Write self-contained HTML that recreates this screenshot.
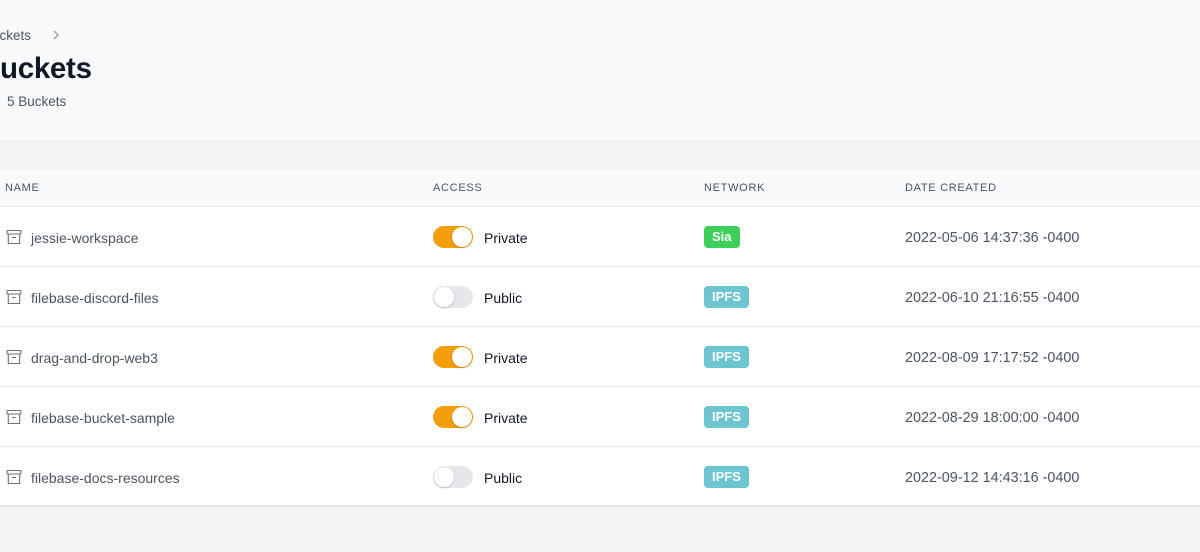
<!DOCTYPE html>
<html><head><meta charset="utf-8"><style>
*{margin:0;padding:0;box-sizing:border-box}
body{width:1200px;height:552px;overflow:hidden;background:#f3f4f6;font-family:"Liberation Sans",Arial,sans-serif;position:relative}
.top{position:absolute;left:0;top:0;width:1200px;height:140px;background:#f9fafb}
.crumb{position:absolute;left:-17px;top:28px;font-size:13.5px;color:#4b5563}
.chev{position:absolute;left:51px;top:29px}
h1{position:absolute;left:-21px;top:52px;font-size:29.5px;font-weight:bold;color:#111827;letter-spacing:-0.3px}
.sub{position:absolute;left:7px;top:94px;font-size:13.5px;color:#4b5563}
.table{position:absolute;left:0;top:170px;width:1200px;height:336px;background:#fff;border-bottom:1px solid #e5e7eb;box-shadow:0 1px 2px rgba(0,0,0,.05)}
.head{height:37px;background:#f9fafb;border-bottom:1px solid #e5e7eb;position:relative}
.th{position:absolute;top:12px;font-size:11px;color:#4b5563;letter-spacing:.7px}
.row{height:60px;border-bottom:1px solid #e5e7eb;position:relative}
.row:last-child{border-bottom:none;height:59px}
.ic{position:absolute;left:6px;top:22px}
.name{position:absolute;left:31px;top:23px;font-size:14px;color:#4b5563}
.tg{position:absolute;left:433px;top:19px;width:40px;height:22px;border-radius:11px;background:#f59e0b}
.tg.off{background:#e5e7eb}
.tg i{position:absolute;top:1px;left:19px;width:20px;height:20px;border-radius:50%;background:#fff;box-shadow:0 1px 2px rgba(0,0,0,.2)}
.tg.off i{left:1px}
.acc{position:absolute;left:484px;top:23px;font-size:14px;color:#111827}
.bd{position:absolute;left:704px;top:19px;height:22px;border-radius:4px;color:#fff;font-size:13px;font-weight:bold;padding:4px 8px 0;line-height:14px}
.sia{background:#3ecf5b}.ipfs{background:#6cc5d0}
.dt{position:absolute;left:905px;top:23px;font-size:14.4px;color:#4b5563}
</style></head><body>
<div class="top">
<div class="crumb">Buckets</div>
<svg class="chev" width="10" height="12" viewBox="0 0 10 12"><path d="M3 2l4 4-4 4" fill="none" stroke="#9ca3af" stroke-width="1.5"/></svg>
<h1>Buckets</h1>
<div class="sub">5 Buckets</div>
</div>
<div class="table">
<div class="head">
<span class="th" style="left:5px">NAME</span>
<span class="th" style="left:433px">ACCESS</span>
<span class="th" style="left:704px">NETWORK</span>
<span class="th" style="left:905px">DATE CREATED</span>
</div>
<div class="row"><svg class="ic" width="16" height="16" viewBox="0 0 16 16" fill="none" stroke="#6b7280" stroke-width="1.1"><rect x="1" y="1.5" width="14" height="3.5" rx=".6"/><path d="M2.3 5v9.5h11.4V5M6 8.5h4"/></svg><span class="name">jessie-workspace</span><div class="tg"><i></i></div><span class="acc">Private</span><span class="bd sia">Sia</span><span class="dt">2022-05-06 14:37:36 -0400</span></div>
<div class="row"><svg class="ic" width="16" height="16" viewBox="0 0 16 16" fill="none" stroke="#6b7280" stroke-width="1.1"><rect x="1" y="1.5" width="14" height="3.5" rx=".6"/><path d="M2.3 5v9.5h11.4V5M6 8.5h4"/></svg><span class="name">filebase-discord-files</span><div class="tg off"><i></i></div><span class="acc">Public</span><span class="bd ipfs">IPFS</span><span class="dt">2022-06-10 21:16:55 -0400</span></div>
<div class="row"><svg class="ic" width="16" height="16" viewBox="0 0 16 16" fill="none" stroke="#6b7280" stroke-width="1.1"><rect x="1" y="1.5" width="14" height="3.5" rx=".6"/><path d="M2.3 5v9.5h11.4V5M6 8.5h4"/></svg><span class="name">drag-and-drop-web3</span><div class="tg"><i></i></div><span class="acc">Private</span><span class="bd ipfs">IPFS</span><span class="dt">2022-08-09 17:17:52 -0400</span></div>
<div class="row"><svg class="ic" width="16" height="16" viewBox="0 0 16 16" fill="none" stroke="#6b7280" stroke-width="1.1"><rect x="1" y="1.5" width="14" height="3.5" rx=".6"/><path d="M2.3 5v9.5h11.4V5M6 8.5h4"/></svg><span class="name">filebase-bucket-sample</span><div class="tg"><i></i></div><span class="acc">Private</span><span class="bd ipfs">IPFS</span><span class="dt">2022-08-29 18:00:00 -0400</span></div>
<div class="row"><svg class="ic" width="16" height="16" viewBox="0 0 16 16" fill="none" stroke="#6b7280" stroke-width="1.1"><rect x="1" y="1.5" width="14" height="3.5" rx=".6"/><path d="M2.3 5v9.5h11.4V5M6 8.5h4"/></svg><span class="name">filebase-docs-resources</span><div class="tg off"><i></i></div><span class="acc">Public</span><span class="bd ipfs">IPFS</span><span class="dt">2022-09-12 14:43:16 -0400</span></div>
</div>
</body></html>
